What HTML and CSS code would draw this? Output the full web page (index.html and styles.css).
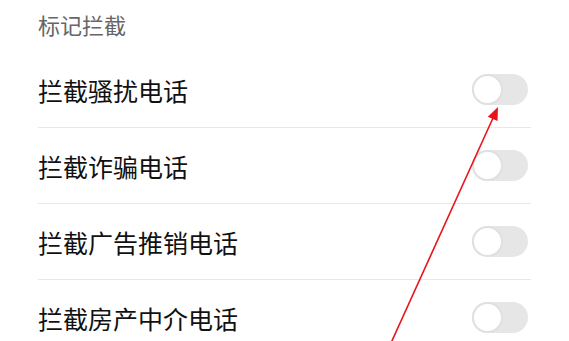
FILE: index.html
```html
<!DOCTYPE html>
<html lang="zh">
<head>
<meta charset="utf-8">
<link rel="stylesheet" href="styles.css">
</head>
<body>
<div class="page">
  <div class="section-title">标记拦截</div>
  <div class="list">
    <div class="row"><span class="label">拦截骚扰电话</span><span class="toggle"><span class="knob"></span></span></div>
    <div class="row"><span class="label">拦截诈骗电话</span><span class="toggle"><span class="knob"></span></span></div>
    <div class="row"><span class="label">拦截广告推销电话</span><span class="toggle"><span class="knob"></span></span></div>
    <div class="row"><span class="label">拦截房产中介电话</span><span class="toggle"><span class="knob"></span></span></div>
  </div>
  <svg class="arrow" width="569" height="341" viewBox="0 0 569 341">
    <line x1="391" y1="343" x2="493" y2="118" stroke="#e8141a" stroke-width="1.6"/>
    <polygon points="498,107 497.5,121 487.8,116.8" fill="#e8141a"/>
  </svg>
</div>
</body>
</html>
```
FILE: styles.css
```css
html, body {
  margin: 0;
  padding: 0;
  background: #ffffff;
}
.page {
  position: relative;
  width: 569px;
  height: 341px;
  overflow: hidden;
  font-family: "Noto Sans CJK SC", "Noto Sans", sans-serif;
}
.section-title {
  height: 52px;
  box-sizing: border-box;
  padding: 9px 0 0 38px;
  font-size: 22px;
  line-height: 30px;
  color: #666666;
}
.list {
  margin: 0 38px;
}
.row {
  height: 76px;
  box-sizing: border-box;
  border-bottom: 1px solid #e8e8e8;
  display: flex;
  align-items: center;
  justify-content: space-between;
  padding-right: 3px;
}
.label {
  font-size: 25px;
  color: #111111;
  line-height: 34px;
}
.toggle {
  position: relative;
  width: 56px;
  height: 31px;
  border-radius: 16px;
  background: #e6e6e6;
}
.knob {
  position: absolute;
  left: 0;
  top: 0;
  width: 31px;
  height: 31px;
  box-sizing: border-box;
  border-radius: 50%;
  background: #ffffff;
  border: 2px solid #e0e0e0;
}
.arrow {
  position: absolute;
  left: 0;
  top: 0;
  pointer-events: none;
}
```
